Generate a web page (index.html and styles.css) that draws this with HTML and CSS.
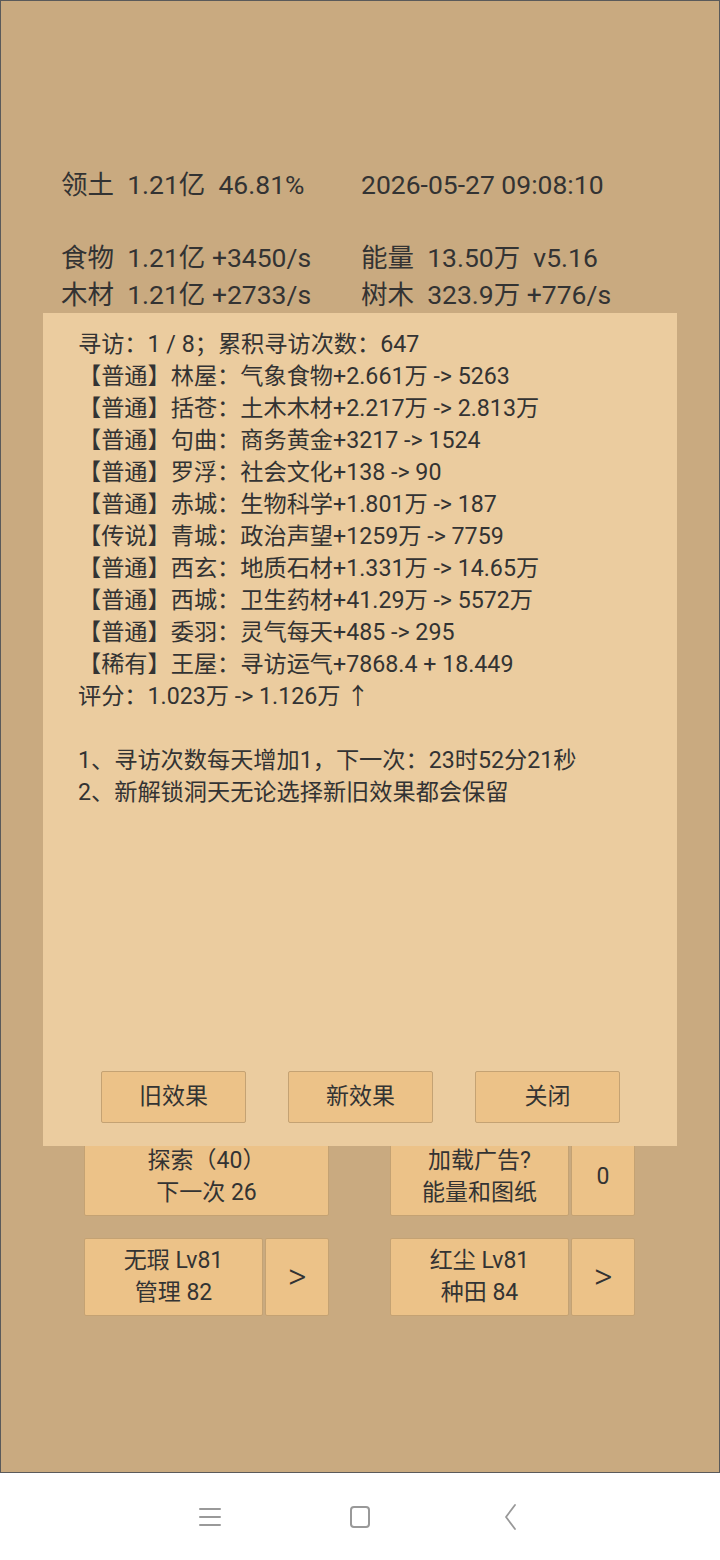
FILE: index.html
```html
<!DOCTYPE html>
<html lang="zh">
<head>
    <meta charset="UTF-8">
    <meta name="viewport" content="width=device-width, initial-scale=1.0">
    <title>洞天寻访</title>
    <link rel="stylesheet" href="styles.css">
</head>
<body>
    <div class="app">
        <div class="stats">
            <div>领土&nbsp;&nbsp;1.21亿&nbsp;&nbsp;46.81%</div>
            <div>2026-05-27 09:08:10</div>
            <div class="blank"></div>
            <div class="blank"></div>
            <div>食物&nbsp;&nbsp;1.21亿 +3450/s</div>
            <div>能量&nbsp;&nbsp;13.50万&nbsp;&nbsp;v5.16</div>
            <div>木材&nbsp;&nbsp;1.21亿 +2733/s</div>
            <div>树木&nbsp;&nbsp;323.9万 +776/s</div>
        </div>

        <div class="actions">
            <div class="row">
                <div class="group">
                    <button class="btn wide">探索（40）<br>下一次 26</button>
                </div>
                <div class="group">
                    <button class="btn">加载广告?<br>能量和图纸</button>
                    <button class="btn small">0</button>
                </div>
            </div>
            <div class="row">
                <div class="group">
                    <button class="btn">无瑕 Lv81<br>管理 82</button>
                    <button class="btn small arrow">&gt;</button>
                </div>
                <div class="group">
                    <button class="btn">红尘 Lv81<br>种田 84</button>
                    <button class="btn small arrow">&gt;</button>
                </div>
            </div>
        </div>

        <!-- 寻访弹窗 -->
        <div class="dialog">
            <div class="dialog-text">
                <p>寻访：1 / 8；累积寻访次数：647</p>
                <p>【普通】林屋：气象食物+2.661万 -&gt; 5263</p>
                <p>【普通】括苍：土木木材+2.217万 -&gt; 2.813万</p>
                <p>【普通】句曲：商务黄金+3217 -&gt; 1524</p>
                <p>【普通】罗浮：社会文化+138 -&gt; 90</p>
                <p>【普通】赤城：生物科学+1.801万 -&gt; 187</p>
                <p>【传说】青城：政治声望+1259万 -&gt; 7759</p>
                <p>【普通】西玄：地质石材+1.331万 -&gt; 14.65万</p>
                <p>【普通】西城：卫生药材+41.29万 -&gt; 5572万</p>
                <p>【普通】委羽：灵气每天+485 -&gt; 295</p>
                <p>【稀有】王屋：寻访运气+7868.4 + 18.449</p>
                <p>评分：1.023万 -&gt; 1.126万 ↑</p>
                <p class="blank"></p>
                <p>1、寻访次数每天增加1，下一次：23时52分21秒</p>
                <p>2、新解锁洞天无论选择新旧效果都会保留</p>
            </div>
            <div class="dialog-buttons">
                <button class="btn choice">旧效果</button>
                <button class="btn choice">新效果</button>
                <button class="btn choice">关闭</button>
            </div>
        </div>
    </div>

    <div class="navbar">
        <svg width="24" height="24" viewBox="0 0 24 24" fill="none" stroke="#999" stroke-width="2" stroke-linecap="round">
            <path d="M2 4h20M2 12h20M2 20h20"/>
        </svg>
        <svg width="24" height="24" viewBox="0 0 24 24" fill="none" stroke="#999" stroke-width="2">
            <rect x="3" y="2" width="18" height="20" rx="3"/>
        </svg>
        <svg width="24" height="26" viewBox="0 0 24 26" fill="none" stroke="#999" stroke-width="1.8" stroke-linecap="round" stroke-linejoin="round">
            <path d="M17 1L8 13l9 12"/>
        </svg>
    </div>
</body>
</html>
```

FILE: styles.css
```css
body {
    margin: 0;
    background: #ffffff;
    font-family: Roboto, "Noto Sans CJK SC", sans-serif;
    color: #333333;
}

.app {
    position: relative;
    height: 1473px;
    box-sizing: border-box;
    border: 1px solid #5a5a5a;
    background: #c9aa80;
    display: flex;
    flex-direction: column;
}

.stats {
    display: grid;
    grid-template-columns: 300px 300px;
    padding: 166px 0 0 60px;
    font-size: 26.5px;
    line-height: 36.5px;
    white-space: nowrap;
}

.blank {
    height: 36.5px;
}

.actions {
    display: flex;
    flex-direction: column;
    gap: 22px;
    margin-top: 825px;
    padding-left: 83px;
}

.row {
    display: flex;
    gap: 61px;
}

.group {
    display: flex;
    gap: 2px;
    width: 245px;
}

.btn {
    font-family: Roboto, "Noto Sans CJK SC", sans-serif;
    font-size: 23px;
    line-height: 32px;
    color: #333333;
    background: #ecc288;
    border: 1px solid #c4a273;
    border-radius: 2px;
    padding: 0;
    height: 78px;
    flex: 1;
}

.btn.small {
    flex: 0 0 64px;
}

.btn.arrow {
    font-size: 36px;
    font-weight: 300;
}

.dialog {
    position: absolute;
    top: 312px;
    left: 42px;
    width: 634px;
    height: 833px;
    background: #ebcc9f;
    display: flex;
    flex-direction: column;
    justify-content: space-between;
}

.dialog-text {
    padding: 15px 0 0 35px;
    font-size: 23.2px;
    line-height: 32px;
    white-space: nowrap;
}

.dialog-text p {
    margin: 0;
}

.dialog-text .blank {
    height: 32px;
}

.dialog-buttons {
    display: flex;
    gap: 42px;
    padding: 0 0 23px 58px;
}

.btn.choice {
    flex: 0 0 145px;
    height: 52px;
}

.navbar {
    height: 87px;
    display: flex;
    justify-content: center;
    align-items: center;
    gap: 126px;
}
```
